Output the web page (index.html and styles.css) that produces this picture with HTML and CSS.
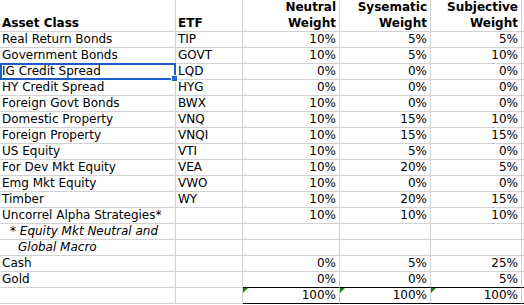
FILE: index.html
```html
<!DOCTYPE html>
<html>
<head>
<meta charset="utf-8">
<link rel="stylesheet" href="styles.css">
</head>
<body>
<div class="sheet">
  <div class="c hd left">Asset Class</div>
  <div class="c hd left">ETF</div>
  <div class="c hd">Neutral<br>Weight</div>
  <div class="c hd">Sysematic<br>Weight</div>
  <div class="c hd">Subjective<br>Weight</div>
  <div class="c hd pad"></div>

  <div class="c">Real Return Bonds</div><div class="c">TIP</div><div class="c num">10%</div><div class="c num">5%</div><div class="c num">5%</div><div class="c pad"></div>
  <div class="c">Government Bonds</div><div class="c">GOVT</div><div class="c num">10%</div><div class="c num">5%</div><div class="c num">10%</div><div class="c pad"></div>
  <div class="c sel">IG Credit Spread<span class="handle"></span></div><div class="c">LQD</div><div class="c num">0%</div><div class="c num">0%</div><div class="c num">0%</div><div class="c pad"></div>
  <div class="c">HY Credit Spread</div><div class="c">HYG</div><div class="c num">0%</div><div class="c num">0%</div><div class="c num">0%</div><div class="c pad"></div>
  <div class="c">Foreign Govt Bonds</div><div class="c">BWX</div><div class="c num">10%</div><div class="c num">0%</div><div class="c num">0%</div><div class="c pad"></div>
  <div class="c">Domestic Property</div><div class="c">VNQ</div><div class="c num">10%</div><div class="c num">15%</div><div class="c num">10%</div><div class="c pad"></div>
  <div class="c">Foreign Property</div><div class="c">VNQI</div><div class="c num">10%</div><div class="c num">15%</div><div class="c num">15%</div><div class="c pad"></div>
  <div class="c">US Equity</div><div class="c">VTI</div><div class="c num">10%</div><div class="c num">5%</div><div class="c num">0%</div><div class="c pad"></div>
  <div class="c">For Dev Mkt Equity</div><div class="c">VEA</div><div class="c num">10%</div><div class="c num">20%</div><div class="c num">5%</div><div class="c pad"></div>
  <div class="c">Emg Mkt Equity</div><div class="c">VWO</div><div class="c num">10%</div><div class="c num">0%</div><div class="c num">0%</div><div class="c pad"></div>
  <div class="c">Timber</div><div class="c">WY</div><div class="c num">10%</div><div class="c num">20%</div><div class="c num">15%</div><div class="c pad"></div>
  <div class="c">Uncorrel Alpha Strategies*</div><div class="c"></div><div class="c num">10%</div><div class="c num">10%</div><div class="c num">10%</div><div class="c pad"></div>
  <div class="c note1">* Equity Mkt Neutral and</div><div class="c"></div><div class="c num"></div><div class="c num"></div><div class="c num"></div><div class="c pad"></div>
  <div class="c note2">Global Macro</div><div class="c"></div><div class="c num"></div><div class="c num"></div><div class="c num"></div><div class="c pad"></div>
  <div class="c">Cash</div><div class="c"></div><div class="c num">0%</div><div class="c num">5%</div><div class="c num">25%</div><div class="c pad"></div>
  <div class="c">Gold</div><div class="c"></div><div class="c num">0%</div><div class="c num">0%</div><div class="c num">5%</div><div class="c pad"></div>
  <div class="c"></div><div class="c"></div><div class="c num tot">100%</div><div class="c num tot">100%</div><div class="c num tot">100%</div><div class="c pad tot"></div>
</div>
</body>
</html>
```
FILE: styles.css
```css
html, body {
  margin: 0;
  padding: 0;
  background: #ffffff;
}

.sheet {
  display: grid;
  grid-template-columns: 176px 67px 97px 91px 91px 2px;
  font-family: "DejaVu Sans", Verdana, sans-serif;
  font-size: 12px;
  color: #000000;
  width: 524px;
}

.c {
  position: relative;
  box-sizing: border-box;
  height: 16px;
  line-height: 15px;
  padding: 0 3px 0 2px;
  border-right: 1px solid #d2d2d2;
  border-bottom: 1px solid #d2d2d2;
  white-space: nowrap;
  overflow: visible;
}

.c.pad {
  border-right: none;
  padding: 0;
}

.hd {
  height: 32px;
  line-height: 16px;
  font-weight: bold;
  display: flex;
  flex-direction: column;
  justify-content: flex-end;
  align-items: flex-end;
  text-align: right;
  padding-bottom: 0;
}

.hd.left {
  align-items: flex-start;
  text-align: left;
}

.num {
  text-align: right;
}

.note1 {
  font-style: italic;
  padding-left: 10px;
}

.note2 {
  font-style: italic;
  padding-left: 18px;
}

.tot {
  border-top: 1px solid #000000;
  border-bottom: 1px solid #000000;
  margin-top: -1px;
  height: 17px;
}

.num.tot::before {
  content: "";
  position: absolute;
  left: 0;
  top: 0;
  width: 0;
  height: 0;
  border-top: 5px solid #1f7f1f;
  border-right: 5px solid transparent;
}

.sel::after {
  content: "";
  position: absolute;
  left: 0;
  top: -1px;
  width: 176px;
  height: 17px;
  box-sizing: border-box;
  border: 2px solid #1d5bc6;
}

.handle {
  position: absolute;
  left: 172px;
  top: 12px;
  width: 5px;
  height: 5px;
  box-sizing: border-box;
  background: #2f6fd6;
  border: 1px solid #1d5bc6;
  outline: 1px solid #ffffff;
  z-index: 2;
}
```
